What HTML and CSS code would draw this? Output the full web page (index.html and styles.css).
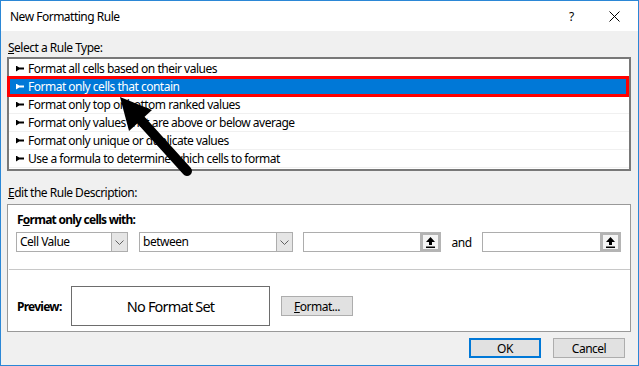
FILE: index.html
```html
<!DOCTYPE html>
<html lang="en">
<head>
    <meta charset="UTF-8">
    <title>New Formatting Rule</title>
    <link rel="stylesheet" href="styles.css">
</head>
<body>

<div class="window">
    <div class="titlebar">
        <span class="title">New Formatting Rule</span>
        <span class="help">?</span>
        <svg class="close" width="11" height="11" viewBox="0 0 11 11">
            <path d="M0.5 0.5 L10.5 10.5 M10.5 0.5 L0.5 10.5" stroke="#000" stroke-width="1"/>
        </svg>
    </div>

    <div class="content">
        <div class="group-label"><u>S</u>elect a Rule Type:</div>

        <div class="rule-list">
            <div class="rule-row"><span class="pointer"></span>Format all cells based on their values</div>
            <div class="rule-row selected"><span class="pointer"></span>Format only cells that contain</div>
            <div class="rule-row"><span class="pointer"></span>Format only top or bottom ranked values</div>
            <div class="rule-row"><span class="pointer"></span>Format only values that are above or below average</div>
            <div class="rule-row"><span class="pointer"></span>Format only unique or duplicate values</div>
            <div class="rule-row"><span class="pointer"></span>Use a formula to determine which cells to format</div>
            <!-- red annotation box -->
            <div class="highlight"></div>
        </div>

        <div class="group-label edit-label"><u>E</u>dit the Rule Description:</div>

        <div class="desc-box">
            <div class="desc-title">F<u>o</u>rmat only cells with:</div>

            <div class="controls">
                <div class="dropdown dd-type">
                    <span class="dd-text">Cell Value</span>
                    <span class="dd-btn"><svg width="9" height="5" viewBox="0 0 9 5"><path d="M0.5 0.5 L4.5 4.5 L8.5 0.5" fill="none" stroke="#606060"/></svg></span>
                </div>
                <div class="dropdown dd-op">
                    <span class="dd-text">between</span>
                    <span class="dd-btn"><svg width="9" height="5" viewBox="0 0 9 5"><path d="M0.5 0.5 L4.5 4.5 L8.5 0.5" fill="none" stroke="#606060"/></svg></span>
                </div>
                <div class="ref-input in-first">
                    <span class="ref-field"></span>
                    <span class="ref-btn"><svg width="9" height="11" viewBox="0 0 9 11"><path d="M4.5 0 L9 5 L6 5 L6 8 L3 8 L3 5 L0 5 Z M0 9.5 L9 9.5 L9 11 L0 11 Z" fill="#000"/></svg></span>
                </div>
                <span class="and">and</span>
                <div class="ref-input in-second">
                    <span class="ref-field"></span>
                    <span class="ref-btn"><svg width="9" height="11" viewBox="0 0 9 11"><path d="M4.5 0 L9 5 L6 5 L6 8 L3 8 L3 5 L0 5 Z M0 9.5 L9 9.5 L9 11 L0 11 Z" fill="#000"/></svg></span>
                </div>
            </div>

            <div class="separator"></div>

            <div class="preview-row">
                <span class="preview-label">Preview:</span>
                <div class="preview-box">No Format Set</div>
                <button class="btn format-btn"><u>F</u>ormat...</button>
            </div>
        </div>

        <div class="footer">
            <button class="btn ok-btn">OK</button>
            <button class="btn">Cancel</button>
        </div>
    </div>

    <!-- black annotation arrow -->
    <svg class="annotation" width="639" height="366" viewBox="0 0 639 366">
        <line x1="187" y1="171" x2="139" y2="118" stroke="#000" stroke-width="10" stroke-linecap="round"/>
        <polygon points="120,97 152,110 129,131" fill="#000"/>
    </svg>
</div>

</body>
</html>
```

FILE: styles.css
```css
* {
    margin: 0;
    padding: 0;
    box-sizing: border-box;
}

body {
    font-family: 'Noto Sans', 'Liberation Sans', sans-serif;
    font-size: 12px;
    letter-spacing: -0.5px;
    color: #000;
    background-color: #f0f0f0;
}

.window {
    position: relative;
    width: 639px;
    height: 366px;
    border: 1px solid #2b87d6;
    background-color: #f0f0f0;
    overflow: hidden;
}

.titlebar {
    height: 30px;
    background-color: #fff;
    display: flex;
    align-items: center;
    padding-left: 9px;
}

.title {
    flex: 1;
}

.help {
    width: 10px;
    margin-right: 30px;
}

.close {
    margin-right: 18px;
}

.content {
    padding: 0 7px 0 6px;
}

.group-label {
    line-height: 15px;
    padding-top: 9px;
    padding-left: 1px;
}

.edit-label {
    padding-top: 0;
    margin-top: 14px;
}

/* rule type list */
.rule-list {
    position: relative;
    margin-top: 2px;
    height: 114px;
    border: 2px solid #787878;
    background-color: #fff;
    padding-top: 1px;
}

.rule-row {
    display: flex;
    align-items: center;
    height: 18px;
    padding-left: 7px;
    border-bottom: 1px solid #f0f0f0;
    white-space: nowrap;
}

.pointer {
    width: 8px;
    height: 6px;
    margin-right: 4px;
    background-color: #000;
    clip-path: polygon(0 0, 40% 35%, 100% 35%, 100% 65%, 40% 65%, 0 100%);
}

.rule-row.selected {
    background-color: #0078d7;
    color: #fff;
}

.rule-row.selected .pointer {
    background-color: #fff;
}

.highlight {
    position: absolute;
    left: -2px;
    top: 17px;
    width: 622px;
    height: 21px;
    border: 3px solid #ff0000;
}

/* rule description */
.desc-box {
    margin-top: 4px;
    height: 128px;
    border: 1px solid #999;
    background-color: #fff;
    padding-top: 7px;
}

.desc-title {
    font-weight: bold;
    letter-spacing: -0.75px;
    line-height: 15px;
    padding-left: 9px;
}

.controls {
    display: flex;
    align-items: center;
    margin-top: 5px;
    padding-left: 8px;
    height: 20px;
}

.dropdown, .ref-input {
    display: flex;
    height: 20px;
    border: 1px solid #adadad;
    background-color: #fff;
}

.dd-type {
    width: 112px;
}

.dd-op {
    width: 154px;
    margin-left: 11px;
}

.dd-text {
    flex: 1;
    line-height: 18px;
    padding-left: 3px;
}

.dd-btn {
    width: 16px;
    border-left: 1px solid #adadad;
    background-color: #e5e5e5;
    display: flex;
    align-items: center;
    justify-content: center;
}

.in-first {
    width: 138px;
    margin-left: 10px;
}

.in-second {
    width: 139px;
}

.ref-field {
    flex: 1;
}

.ref-btn {
    width: 21px;
    margin: -1px -1px -1px 0;
    border: 3px solid #b4b4b4;
    background-color: #f4f4f4;
    display: flex;
    align-items: center;
    justify-content: center;
}

.and {
    width: 41px;
    text-align: center;
}

.separator {
    height: 1px;
    margin: 17px 0 0 1px;
    background-color: #c8c8c8;
}

.preview-row {
    display: flex;
    align-items: center;
    margin-top: 16px;
    padding-left: 9px;
}

.preview-label {
    font-weight: bold;
    letter-spacing: -0.75px;
    width: 54px;
}

.preview-box {
    width: 199px;
    height: 40px;
    border: 1px solid #6d6d6d;
    display: flex;
    align-items: center;
    justify-content: center;
    font-size: 14.5px;
    letter-spacing: -0.8px;
}

/* buttons */
.btn {
    font-family: inherit;
    font-size: 12px;
    letter-spacing: -0.5px;
    color: #000;
    width: 72px;
    height: 20px;
    border: 1px solid #adadad;
    background-color: #e1e1e1;
}

.format-btn {
    margin-left: 11px;
}

.footer {
    display: flex;
    justify-content: flex-end;
    gap: 12px;
    margin-top: 6px;
    padding-right: 6px;
}

.ok-btn {
    border: 2px solid #0078d7;
}

.annotation {
    position: absolute;
    left: -1px;
    top: -1px;
    pointer-events: none;
}
```
